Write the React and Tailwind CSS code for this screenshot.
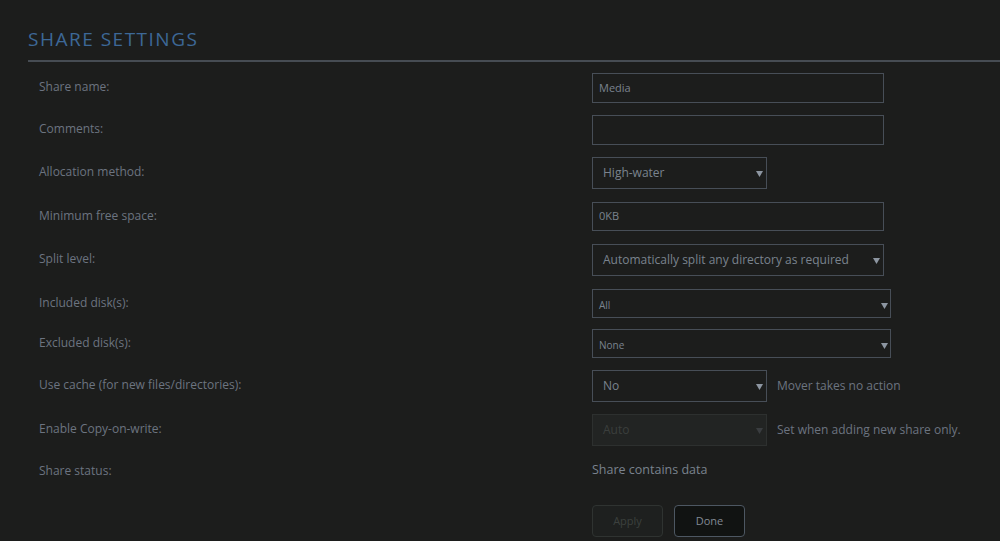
import React from "react";

const font = { fontFamily: '"Open Sans", "Liberation Sans", sans-serif' };

function Caret({ dim }) {
  return (
    <svg width="7" height="7" viewBox="0 0 7 7" className="shrink-0">
      <polygon points="0,1 7,1 3.5,7" fill={dim ? "#3a3d40" : "#8d96a1"} />
    </svg>
  );
}

function TextBox({ value, h = "h-[30px]" }) {
  return (
    <div className={`${h} w-[292px] border border-[#474e57] flex items-center px-[6px] text-[11px] text-[#7a838e]`}>
      {value}
    </div>
  );
}

function Select({ value, w = "w-[175px]", h = "h-[32px]", small, disabled }) {
  return (
    <div
      className={`${w} ${h} border flex items-center justify-between ${
        disabled
          ? "border-[#2d302f] bg-[#222423] text-[#3b3f3d]"
          : "border-[#474e57] text-[#7a838e]"
      } ${small ? "pl-[6px] pr-[2px] text-[10px] pt-[3px]" : "pl-[10px] pr-[3px] text-[12px]"}`}
    >
      <span>{value}</span>
      <Caret dim={disabled} />
    </div>
  );
}

function Row({ label, children, h, note, className = "" }) {
  return (
    <div className={`flex items-center ${h} ${className}`}>
      <div className="w-[564px] shrink-0 pl-[11px] pb-[2px] text-[12px] text-[#6c7480]">{label}</div>
      {children}
      {note && <span className="ml-[10px] text-[12px] text-[#6c7480]">{note}</span>}
    </div>
  );
}

export default function App() {
  return (
    <div className="min-h-[541px] w-full bg-[#1c1d1c] pl-[28px] pt-[27px] overflow-hidden" style={font}>
      <h1 className="text-[19px] leading-[24px] tracking-[1.5px] text-[#3d6897]">SHARE SETTINGS</h1>
      <div className="mt-[9px] h-[2px] bg-[#464c53]" />

      <div className="mt-[11px] flex flex-col gap-[12px]">
        <Row label="Share name:" h="h-[30px]">
          <TextBox value="Media" />
        </Row>
        <Row label="Comments:" h="h-[30px]">
          <TextBox value="" />
        </Row>
        <Row label="Allocation method:" h="h-[32px]">
          <Select value="High-water" />
        </Row>
        <Row label="Minimum free space:" h="h-[29px]" className="mt-[1px]">
          <TextBox value="0KB" h="h-[29px]" />
        </Row>
        <Row label="Split level:" h="h-[32px]" className="mt-[1px]">
          <Select value="Automatically split any directory as required" w="w-[292px]" />
        </Row>
        <Row label="Included disk(s):" h="h-[29px]" className="mt-[1px]">
          <Select value="All" w="w-[299px]" h="h-[29px]" small />
        </Row>
        <Row label="Excluded disk(s):" h="h-[29px]" className="-mt-[1px]">
          <Select value="None" w="w-[299px]" h="h-[29px]" small />
        </Row>
        <Row label="Use cache (for new files/directories):" h="h-[32px]" note="Mover takes no action">
          <Select value="No" />
        </Row>
        <Row label="Enable Copy-on-write:" h="h-[32px]" note="Set when adding new share only.">
          <Select value="Auto" disabled />
        </Row>
        <Row label="Share status:" h="h-[22px]" className="mt-[3px]">
          <span className="text-[12.5px] text-[#7a838e] pb-[3px]">Share contains data</span>
        </Row>
      </div>

      <div className="mt-[22px] ml-[564px] flex gap-[11px]">
        <button className="w-[71px] h-[32px] rounded-[4px] border border-[#2f3331] bg-[#1e201f] text-[11px] text-[#3c403e]">
          Apply
        </button>
        <button className="w-[71px] h-[32px] rounded-[4px] border border-[#4d5762] bg-[#111312] text-[11px] text-[#818a94]">
          Done
        </button>
      </div>
    </div>
  );
}
